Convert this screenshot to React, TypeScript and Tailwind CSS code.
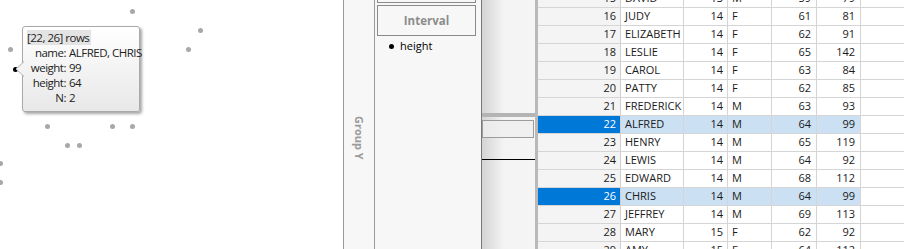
import React from 'react';

interface Row {
  n: number;
  name: string;
  age: number;
  sex: string;
  height: number;
  weight: number;
}

const rows: Row[] = [
  { n: 15, name: 'DAVID', age: 13, sex: 'M', height: 59, weight: 79 },
  { n: 16, name: 'JUDY', age: 14, sex: 'F', height: 61, weight: 81 },
  { n: 17, name: 'ELIZABETH', age: 14, sex: 'F', height: 62, weight: 91 },
  { n: 18, name: 'LESLIE', age: 14, sex: 'F', height: 65, weight: 142 },
  { n: 19, name: 'CAROL', age: 14, sex: 'F', height: 63, weight: 84 },
  { n: 20, name: 'PATTY', age: 14, sex: 'F', height: 62, weight: 85 },
  { n: 21, name: 'FREDERICK', age: 14, sex: 'M', height: 63, weight: 93 },
  { n: 22, name: 'ALFRED', age: 14, sex: 'M', height: 64, weight: 99 },
  { n: 23, name: 'HENRY', age: 14, sex: 'M', height: 65, weight: 119 },
  { n: 24, name: 'LEWIS', age: 14, sex: 'M', height: 64, weight: 92 },
  { n: 25, name: 'EDWARD', age: 14, sex: 'M', height: 68, weight: 112 },
  { n: 26, name: 'CHRIS', age: 14, sex: 'M', height: 64, weight: 99 },
  { n: 27, name: 'JEFFREY', age: 14, sex: 'M', height: 69, weight: 113 },
  { n: 28, name: 'MARY', age: 15, sex: 'F', height: 62, weight: 92 },
  { n: 29, name: 'AMY', age: 15, sex: 'F', height: 64, weight: 112 },
];

const selected = [22, 26];

// scatter points on the graph canvas
const points = [
  [132, 11], [200, 30], [10, 49], [188, 49], [47, 126], [112, 126],
  [132, 126], [67, 145], [79, 145], [0, 163], [0, 182],
];

const App: React.FC = () => {
  return (
    <div
      className="w-[904px] h-[249px] overflow-hidden flex bg-white text-[11px] text-[#1a1a1a]"
      style={{ fontFamily: '"Open Sans", "Noto Sans", sans-serif' }}
    >
      {/* Graph canvas */}
      <div className="relative w-[343px] h-full bg-white shrink-0">
        {points.map(([x, y], i) => (
          <div
            key={i}
            className="absolute w-[5px] h-[5px] rounded-full bg-[#a8a8a8]"
            style={{ left: x - 2, top: y - 2 }}
          />
        ))}
        <div className="absolute left-[13px] top-[67px] w-[5px] h-[5px] rounded-full bg-black" />

        {/* Hover label */}
        <div className="absolute left-[22px] top-[26px] w-[118px] h-[86px] rounded-[3px] border border-[#a9a9a9] bg-gradient-to-b from-white to-[#e8e8e8] shadow-[2px_2px_3px_rgba(0,0,0,0.35)]">
          <svg className="absolute left-[-8px] top-[34px]" width="9" height="16" viewBox="0 0 9 16">
            <path d="M9 0.5 L1 8 L9 15.5" fill="#f3f3f3" stroke="#b0b0b0" strokeWidth="1" />
          </svg>
          <div className="pl-[2px] pt-[3px] leading-[15px] text-[11.5px] tracking-[-0.5px] text-[#222]">
            <div className="inline-block ml-[2px] bg-[#e3e3e3] pr-[2px]">[22, 26] rows</div>
            <div className="grid grid-cols-[41px_1fr] gap-x-[3px] whitespace-nowrap">
              <span className="text-right">name:</span>
              <span>ALFRED, CHRIS</span>
              <span className="text-right">weight:</span>
              <span>99</span>
              <span className="text-right">height:</span>
              <span>64</span>
              <span className="text-right">N:</span>
              <span>2</span>
            </div>
          </div>
        </div>
      </div>

      {/* Group Y strip */}
      <div className="w-[32px] h-full shrink-0 border-l border-r border-[#9a9a9a] bg-[#f7f7f7] flex justify-center pt-[116px]">
        <span
          className="font-bold text-[#9b9b9b] text-[11px] leading-none h-fit"
          style={{ writingMode: 'vertical-rl' }}
        >
          Group Y
        </span>
      </div>

      {/* Legend / elements panel */}
      <div className="w-[107px] h-full shrink-0 border-r border-[#7a7a7a] bg-[#f7f7f7] flex flex-col pl-[2px] pr-[5px]">
        <div className="h-[4px] border-l border-r border-b border-[#8a8a8a] -mt-[1px]" />
        <div className="mt-[2px] h-[31px] border border-[#8a8a8a] flex items-center justify-center font-bold text-[#8c8c8c] text-[11.5px]">
          Interval
        </div>
        <div className="flex items-center mt-[2px] h-[17px] pl-[12px]">
          <span className="w-[5px] h-[5px] rounded-full bg-black" />
          <span className="ml-[6px] text-black">height</span>
        </div>
      </div>

      {/* Shaded gutter */}
      <div className="w-[53px] h-full shrink-0 bg-gradient-to-r from-[#d4d4d4] via-[#f3f3f3] via-40% to-[#f5f5f5] flex flex-col pt-[113px]">
        <div className="h-[4px] bg-[#b4b4b4]" />
        <div className="mt-[3px] h-[18px] mr-[1px] border border-[#9c9c9c] bg-[#efefef]/80" />
        <div className="mt-[21px] h-[1px] bg-black" />
      </div>
      <div className="w-[3px] h-full shrink-0 bg-[#b9b9b9]" />

      {/* Data table */}
      <div className="flex-1 h-full overflow-hidden">
        <div className="-mt-[10px]">
          {rows.map((r) => {
            const sel = selected.includes(r.n);
            const cell = `h-full flex items-center border-r border-[#d5d5d5] ${sel ? 'bg-[#cbe0f2]' : 'bg-white'}`;
            return (
              <div
                key={r.n}
                className="grid grid-cols-[83px_63px_44px_44px_45px_44px_1fr] h-[18px] border-b border-[#d5d5d5]"
              >
                <div
                  className={`h-full flex items-center justify-end pr-[4px] border-r border-[#cfcfcf] ${
                    sel ? 'bg-[#0078d7] text-white' : 'bg-[#f4f4f4]'
                  }`}
                >
                  {r.n}
                </div>
                <div className={`${cell} pl-[4px]`}>{r.name}</div>
                <div className={`${cell} justify-end pr-[4px]`}>{r.age}</div>
                <div className={`${cell} pl-[4px]`}>{r.sex}</div>
                <div className={`${cell} justify-end pr-[5px]`}>{r.height}</div>
                <div className={`${cell} justify-end pr-[5px]`}>{r.weight}</div>
                <div className="h-full bg-white" />
              </div>
            );
          })}
        </div>
      </div>
    </div>
  );
};

export default App;
